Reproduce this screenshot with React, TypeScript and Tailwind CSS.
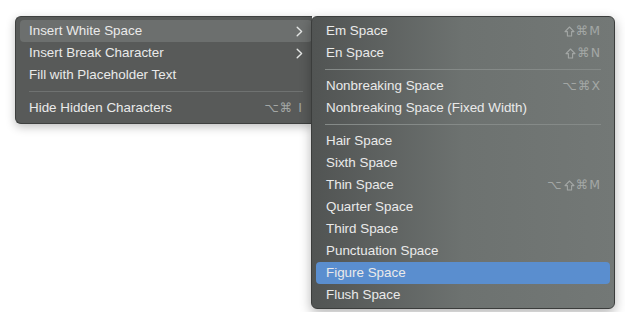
import React from "react";

type Item =
  | { kind: "item"; label: string; shortcut?: string; sub?: boolean; active?: "grey" | "blue" }
  | { kind: "sep" };

const mainItems: Item[] = [
  { kind: "item", label: "Insert White Space", sub: true, active: "grey" },
  { kind: "item", label: "Insert Break Character", sub: true },
  { kind: "item", label: "Fill with Placeholder Text" },
  { kind: "sep" },
  { kind: "item", label: "Hide Hidden Characters", shortcut: "⌥⌘\u00a0I" },
];

// "^" in a shortcut stands for the shift arrow, drawn as svg
const subItems: Item[] = [
  { kind: "item", label: "Em Space", shortcut: "^⌘M" },
  { kind: "item", label: "En Space", shortcut: "^⌘N" },
  { kind: "sep" },
  { kind: "item", label: "Nonbreaking Space", shortcut: "⌥⌘X" },
  { kind: "item", label: "Nonbreaking Space (Fixed Width)" },
  { kind: "sep" },
  { kind: "item", label: "Hair Space" },
  { kind: "item", label: "Sixth Space" },
  { kind: "item", label: "Thin Space", shortcut: "⌥^⌘M" },
  { kind: "item", label: "Quarter Space" },
  { kind: "item", label: "Third Space" },
  { kind: "item", label: "Punctuation Space" },
  { kind: "item", label: "Figure Space", active: "blue" },
  { kind: "item", label: "Flush Space" },
];

const Chevron = () => (
  <svg width="7" height="11" viewBox="0 0 7 11" className="text-[#e4e6e5]">
    <path d="M1.2 1.2 L5.6 5.5 L1.2 9.8" fill="none" stroke="currentColor" strokeWidth="1.4" strokeLinecap="round" strokeLinejoin="round" />
  </svg>
);

const Shift = () => (
  <svg width="11" height="11" viewBox="0 0 11 11" className="mx-[1px]">
    <path d="M5.5 1 L10 5.6 L7.6 5.6 L7.6 10 L3.4 10 L3.4 5.6 L1 5.6 Z" fill="none" stroke="currentColor" strokeWidth="1.1" strokeLinejoin="round" />
  </svg>
);

const Shortcut = ({ keys }: { keys: string }) => (
  <span
    className="flex items-center text-[12.5px] text-[#a3a7a5] tracking-[1px]"
    style={{ fontFamily: '"DejaVu Sans", sans-serif' }}
  >
    {keys.split("").map((k, i) => (k === "^" ? <Shift key={i} /> : <span key={i}>{k}</span>))}
  </span>
);

const MenuRows = ({ items, sepClass, rowPad }: { items: Item[]; sepClass: string; rowPad: string }) => (
  <>
    {items.map((it, i) =>
      it.kind === "sep" ? (
        <div key={i} className="h-[11px] flex items-center px-[9px]">
          <div className={`h-px w-full ${sepClass}`} />
        </div>
      ) : (
        <div
          key={i}
          className={`h-[22px] flex items-center justify-between ${rowPad} pr-[9px] rounded-[4px] ${
            it.active === "grey" ? "bg-[#6c6f6e]" : it.active === "blue" ? "bg-[#5a8ecf]" : ""
          }`}
        >
          <span className="text-[13.4px] text-[#eaeaea]">{it.label}</span>
          {it.sub && <Chevron />}
          {it.shortcut && <Shortcut keys={it.shortcut} />}
        </div>
      )
    )}
  </>
);

export default function App() {
  return (
    <div className="w-[625px] h-[312px] bg-white overflow-hidden" style={{ fontFamily: '"Liberation Sans", Arial, sans-serif' }}>
      <div className="flex items-start pt-[16px] pl-[15px]">
        <div className="w-[297px] pt-[3px] pb-[4px] pl-[4px] bg-[#585a59] rounded-l-[6px] border border-r-0 border-[#3e403f] shadow-[0_3px_10px_rgba(0,0,0,0.25)]">
          <div className="flex flex-col">
            <MenuRows items={mainItems} sepClass="bg-[#6f7271]" rowPad="pl-[9px]" />
          </div>
        </div>
        <div className="w-[304px] -ml-px px-[4px] pt-[3px] pb-[2px] rounded-[6px] border border-[#3b3d3c] bg-gradient-to-r from-[#515453] via-[#6d7270] to-[#737876] shadow-[0_4px_12px_rgba(0,0,0,0.3)]">
          <div className="flex flex-col">
            <MenuRows items={subItems} sepClass="bg-[#858a88]" rowPad="pl-[10px]" />
          </div>
        </div>
      </div>
    </div>
  );
}
